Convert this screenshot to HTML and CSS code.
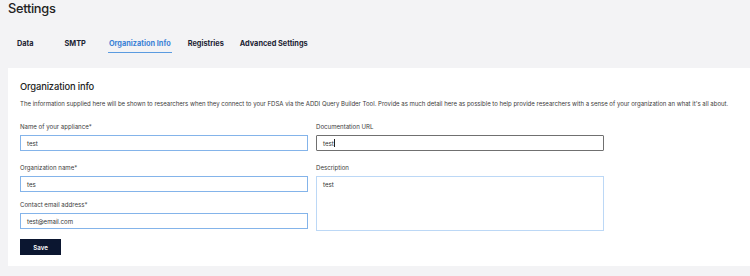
FILE: index.html
```html
<!DOCTYPE html>
<html>
<head>
<meta charset="utf-8">
<link rel="stylesheet" href="styles.css">
</head>
<body>
<div class="page">
  <h1 class="title">Settings</h1>
  <nav class="tabs">
    <span class="tab">Data</span>
    <span class="tab">SMTP</span>
    <span class="tab active">Organization Info</span>
    <span class="tab">Registries</span>
    <span class="tab">Advanced Settings</span>
  </nav>
  <section class="card">
    <h2 class="card-title">Organization info</h2>
    <p class="intro">The information supplied here will be shown to researchers when they connect to your FDSA via the ADDI Query Builder Tool. Provide as much detail here as possible to help provide researchers with a sense of your organization an what it's all about.</p>
    <div class="form">
      <div class="col">
        <div class="field f1">
          <label class="label">Name of your appliance*</label>
          <div class="input blue">test</div>
        </div>
        <div class="field f2">
          <label class="label">Organization name*</label>
          <div class="input blue">tes</div>
        </div>
        <div class="field">
          <label class="label">Contact email address*</label>
          <div class="input blue">test@email.com</div>
        </div>
      </div>
      <div class="col">
        <div class="field f1">
          <label class="label">Documentation URL</label>
          <div class="input dark">test<span class="caret"></span></div>
        </div>
        <div class="field">
          <label class="label">Description</label>
          <div class="textarea">test</div>
        </div>
      </div>
    </div>
    <button class="save">Save</button>
  </section>
</div>
</body>
</html>
```
FILE: styles.css
```css
* { box-sizing: border-box; }
body {
  margin: 0;
  background: #f3f3f5;
  font-family: Inter, "Liberation Sans", sans-serif;
  color: #1d1d1f;
}
.page {
  padding-left: 8px;
}
.title {
  margin: 0;
  padding-top: 1px;
  font-size: 12.8px;
  line-height: 16px;
  font-weight: 500;
  color: #222;
  letter-spacing: -0.3px;
}
.tabs {
  display: flex;
  margin-top: 22px;
  padding-left: 9px;
  height: 15px;
}
.tab {
  font-size: 7.35px;
  font-weight: 700;
  line-height: 10px;
  color: #1c2333;
  height: 14px;
}
.tab:nth-child(1) { margin-right: 31px; }
.tab:nth-child(2) { margin-right: 22px; }
.tab:nth-child(3) { margin-right: 16px; }
.tab:nth-child(4) { margin-right: 16px; }
.tab.active {
  color: #3b82d6;
  border-bottom: 1.5px solid #5a9be0;
  padding: 0 1px;
}
.card {
  margin-top: 14px;
  background: #fff;
  padding: 12px 12px 11px;
  height: 198px;
}
.card-title {
  margin: 0;
  font-size: 9.4px;
  line-height: 14px;
  font-weight: 500;
  color: #222;
  letter-spacing: -0.15px;
}
.intro {
  margin: 6px 0 0;
  font-size: 6.02px;
  line-height: 8px;
  color: #3a3a3a;
  white-space: nowrap;
}
.form {
  display: flex;
  gap: 8px;
  margin-top: 14px;
}
.col {
  display: flex;
  flex-direction: column;
  width: 288px;
}
.field {
  display: flex;
  flex-direction: column;
  gap: 3px;
}
.field.f1 { margin-bottom: 12px; }
.field.f2 { margin-bottom: 8px; }
.label {
  font-size: 6.1px;
  line-height: 10px;
  color: #3a3a3a;
}
.input {
  height: 16px;
  padding: 0 6px;
  font-size: 6.1px;
  line-height: 13px;
  color: #333;
  background: #fff;
  display: flex;
  align-items: center;
}
.input.blue { border: 1.5px solid #84b4ea; }
.input.dark { border: 1.5px solid #707070; border-radius: 1px; }
.caret {
  display: inline-block;
  width: 0.8px;
  height: 8px;
  background: #222;
  margin-left: 0.5px;
}
.textarea {
  height: 55px;
  border: 1.5px solid #bcd8f6;
  padding: 3px 6px;
  font-size: 6.1px;
  line-height: 9px;
  color: #333;
}
.save {
  margin-top: 8px;
  width: 41px;
  height: 16px;
  border: none;
  background: #0b1630;
  color: #fff;
  font-family: Inter, "Liberation Sans", sans-serif;
  font-size: 6.2px;
  font-weight: 600;
  padding: 0;
}
```
